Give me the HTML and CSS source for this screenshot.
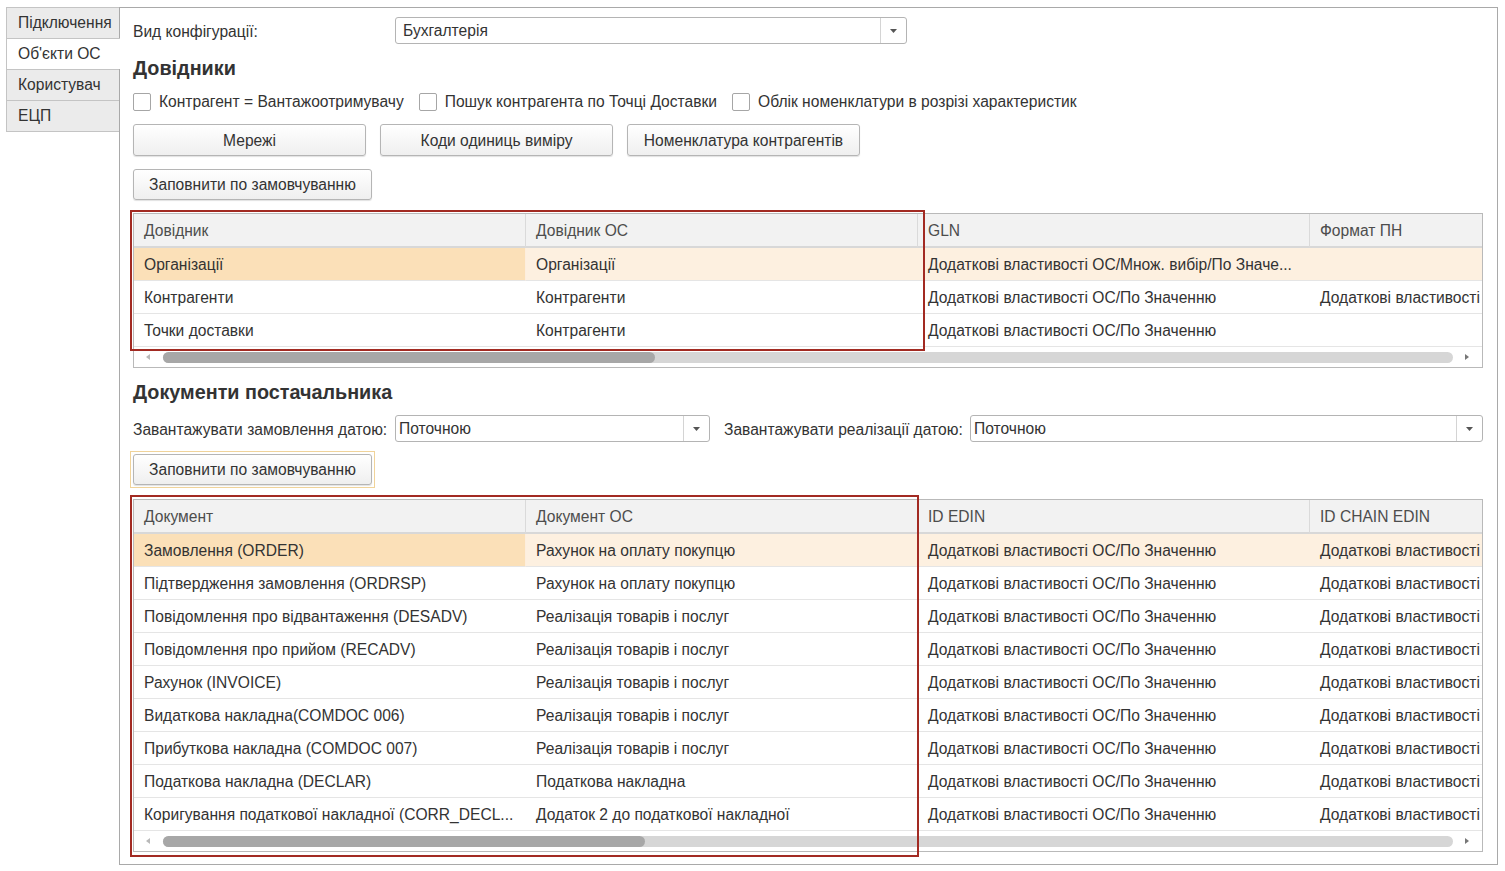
FILE: index.html
```html
<!DOCTYPE html>
<html lang="uk">
<head>
  <meta charset="UTF-8">
  <meta name="viewport" content="width=device-width, initial-scale=1.0">
  <title>Налаштування обміну</title>
  <link rel="stylesheet" href="styles.css">
</head>
<body>
  <div class="window">
    <div class="tabs">
      <div class="tab">Підключення</div>
      <div class="tab active">Об'єкти ОС</div>
      <div class="tab">Користувач</div>
      <div class="tab">ЕЦП</div>
    </div>

    <div class="panel">
      <div class="field-row first">
        <span class="label label-config">Вид конфігурації:</span>
        <div class="select select-config">
          <span class="select-value">Бухгалтерія</span>
          <span class="select-btn"><svg width="7" height="4" viewBox="0 0 7 4"><polygon points="0,0 7,0 3.5,4" fill="#555"/></svg></span>
        </div>
      </div>

      <h2 class="section-title">Довідники</h2>
      <div class="checks">
        <label class="check"><span class="box"></span>Контрагент = Вантажоотримувачу</label>
        <label class="check"><span class="box"></span>Пошук контрагента по Точці Доставки</label>
        <label class="check"><span class="box"></span>Облік номенклатури в розрізі характеристик</label>
      </div>
      <div class="buttons">
        <button class="btn btn-wide">Мережі</button>
        <button class="btn btn-wide">Коди одиниць виміру</button>
        <button class="btn btn-wide">Номенклатура контрагентів</button>
      </div>
      <div class="fill">
        <button class="btn btn-fill">Заповнити по замовчуванню</button>
      </div>

      <div class="grid-wrap grid-refs">
        <div class="grid">
          <table>
            <tr><th>Довідник</th><th>Довідник ОС</th><th>GLN</th><th>Формат ПН</th></tr>
            <tr class="cur-row"><td class="cur">Організації</td><td>Організації</td><td>Додаткові властивості ОС/Множ. вибір/По Значе...</td><td></td></tr>
            <tr><td>Контрагенти</td><td>Контрагенти</td><td>Додаткові властивості ОС/По Значенню</td><td>Додаткові властивості</td></tr>
            <tr><td>Точки доставки</td><td>Контрагенти</td><td>Додаткові властивості ОС/По Значенню</td><td></td></tr>
          </table>
          <div class="hscroll">
            <svg class="arr" width="4" height="6" viewBox="0 0 4 6"><polygon points="4,0 4,6 0,3" fill="#b9b9b9"/></svg>
            <div class="track"><div class="thumb thumb-refs"></div></div>
            <svg class="arr" width="4" height="6" viewBox="0 0 4 6"><polygon points="0,0 0,6 4,3" fill="#777"/></svg>
          </div>
        </div>
        <div class="mark mark-refs"></div>
      </div>

      <h2 class="section-title">Документи постачальника</h2>
      <div class="field-row dates">
        <span class="label label-date">Завантажувати замовлення датою:</span>
        <div class="select select-order">
          <span class="select-value">Поточною</span>
          <span class="select-btn"><svg width="7" height="4" viewBox="0 0 7 4"><polygon points="0,0 7,0 3.5,4" fill="#555"/></svg></span>
        </div>
        <span class="label label-sale">Завантажувати реалізації датою:</span>
        <div class="select select-sale">
          <span class="select-value">Поточною</span>
          <span class="select-btn"><svg width="7" height="4" viewBox="0 0 7 4"><polygon points="0,0 7,0 3.5,4" fill="#555"/></svg></span>
        </div>
      </div>
      <div class="fill focused">
        <button class="btn btn-fill">Заповнити по замовчуванню</button>
      </div>

      <div class="grid-wrap grid-docs">
        <div class="grid">
          <table>
            <tr><th>Документ</th><th>Документ ОС</th><th>ID EDIN</th><th>ID CHAIN EDIN</th></tr>
            <tr class="cur-row"><td class="cur">Замовлення (ORDER)</td><td>Рахунок на оплату покупцю</td><td>Додаткові властивості ОС/По Значенню</td><td>Додаткові властивості</td></tr>
            <tr><td>Підтвердження замовлення (ORDRSP)</td><td>Рахунок на оплату покупцю</td><td>Додаткові властивості ОС/По Значенню</td><td>Додаткові властивості</td></tr>
            <tr><td>Повідомлення про відвантаження (DESADV)</td><td>Реалізація товарів і послуг</td><td>Додаткові властивості ОС/По Значенню</td><td>Додаткові властивості</td></tr>
            <tr><td>Повідомлення про прийом (RECADV)</td><td>Реалізація товарів і послуг</td><td>Додаткові властивості ОС/По Значенню</td><td>Додаткові властивості</td></tr>
            <tr><td>Рахунок (INVOICE)</td><td>Реалізація товарів і послуг</td><td>Додаткові властивості ОС/По Значенню</td><td>Додаткові властивості</td></tr>
            <tr><td>Видаткова накладна(COMDOC 006)</td><td>Реалізація товарів і послуг</td><td>Додаткові властивості ОС/По Значенню</td><td>Додаткові властивості</td></tr>
            <tr><td>Прибуткова накладна (COMDOC 007)</td><td>Реалізація товарів і послуг</td><td>Додаткові властивості ОС/По Значенню</td><td>Додаткові властивості</td></tr>
            <tr><td>Податкова накладна (DECLAR)</td><td>Податкова накладна</td><td>Додаткові властивості ОС/По Значенню</td><td>Додаткові властивості</td></tr>
            <tr><td>Коригування податкової накладної (CORR_DECL...</td><td>Додаток 2 до податкової накладної</td><td>Додаткові властивості ОС/По Значенню</td><td>Додаткові властивості</td></tr>
          </table>
          <div class="hscroll">
            <svg class="arr" width="4" height="6" viewBox="0 0 4 6"><polygon points="4,0 4,6 0,3" fill="#b9b9b9"/></svg>
            <div class="track"><div class="thumb thumb-docs"></div></div>
            <svg class="arr" width="4" height="6" viewBox="0 0 4 6"><polygon points="0,0 0,6 4,3" fill="#777"/></svg>
          </div>
        </div>
        <div class="mark mark-docs"></div>
      </div>
    </div>
  </div>
</body>
</html>
```

FILE: styles.css
```css
*{
  box-sizing: border-box;
}
body{
  margin: 0;
  background: #fff;
  color: #333;
  font-family: "Liberation Sans", Arial, sans-serif;
  font-size: 15.6px;
}
.window{
  display: flex;
  padding: 7px 0 0 6px;
}

/* tabs on the left */
.tabs{
  width: 113px;
  display: flex;
  flex-direction: column;
}
.tab{
  width: 113px;
  height: 31px;
  border: 1px solid #c4c4c4;
  border-right: 0;
  border-bottom: 0;
  background: #ebebeb;
  padding-left: 11px;
  line-height: 29px;
  white-space: nowrap;
}
.tab:last-child{
  border-bottom: 1px solid #c4c4c4;
  height: 32px;
}
.tab.active{
  width: 114px;
  background: #fff;
  position: relative;
  z-index: 1;
}

/* main panel */
.panel{
  width: 1379px;
  height: 858px;
  border: 1px solid #a9a9a9;
  padding: 9px 14px 0 13px;
}
.field-row{
  display: flex;
  align-items: center;
  height: 27px;
}
.dates{
  margin-top: 11px;
}
.label{
  white-space: nowrap;
  flex: none;
  padding-top: 2px;
}
.label-config, .label-date{
  width: 262px;
}
.label-sale{
  width: 246px;
  margin-left: 14px;
}
.select{
  display: flex;
  height: 27px;
  border: 1px solid #b4b4b4;
  border-radius: 3px;
  background: #fff;
}
.select-config{
  width: 512px;
}
.select-order{
  width: 315px;
}
.select-sale{
  flex: 1;
}
.select-value{
  flex: 1;
  padding: 1px 0 0 7px;
  line-height: 24px;
  white-space: nowrap;
}
.dates .select-value{
  padding-left: 3px;
}
.select-btn{
  width: 26px;
  border-left: 1px solid #d4d4d4;
  display: flex;
  align-items: center;
  justify-content: center;
}

.section-title{
  margin: 12px 0 0;
  font-size: 19.8px;
  line-height: 24px;
  font-weight: bold;
  color: #333;
}

.checks{
  margin-top: 12px;
  height: 20px;
  display: flex;
  align-items: center;
  gap: 15px;
}
.check{
  display: flex;
  align-items: center;
  gap: 8px;
  white-space: nowrap;
}
.box{
  width: 18px;
  height: 18px;
  border: 1px solid #a6a6a6;
  border-radius: 2px;
  background: #fff;
}

.btn{
  height: 32px;
  border: 1px solid #b5b5b5;
  border-radius: 3px;
  background: linear-gradient(#fff, #efefef);
  box-shadow: 0 1px 1px rgba(0,0,0,.12);
  font-family: inherit;
  font-size: 15.6px;
  color: #333;
  padding: 1px 0 0;
}
.buttons{
  margin-top: 12px;
  display: flex;
  gap: 14px;
}
.btn-wide{
  width: 233px;
}
.fill{
  margin-top: 13px;
}
.btn-fill{
  width: 239px;
  height: 31px;
}
.fill.focused{
  margin: 9px 0 0 -3px;
  width: 245px;
  padding: 2px;
  border: 1px solid #f0d39a;
}

/* grids */
.grid-wrap{
  position: relative;
  margin-top: 13px;
}
.grid-docs{
  margin-top: 11px;
}
.grid{
  border: 1px solid #b9b9b9;
  overflow: hidden;
}
table{
  border-collapse: separate;
  border-spacing: 0;
  table-layout: fixed;
  width: 1568px;
}
th, td{
  width: 392px;
  padding: 2px 0 0 10px;
  text-align: left;
  white-space: nowrap;
  overflow: hidden;
  font-weight: normal;
}
th{
  height: 34px;
  background: #f2f2f2;
  color: #4d4d4d;
  border-right: 1px solid #dadada;
  border-bottom: 2px solid #d8d8d8;
  line-height: 30px;
}
td{
  height: 33px;
  border-bottom: 1px solid #e5e5e5;
  line-height: 30px;
}
.cur-row td{
  background: #fdf0e0;
}
.cur-row td.cur{
  background: #fbe0b8;
  border-right: 1px solid #fdeedd;
}

.hscroll{
  height: 20px;
  display: flex;
  align-items: center;
  padding: 0 13px 0 12px;
}
.arr{
  flex: none;
}
.track{
  flex: 1;
  height: 11px;
  margin: 0 12px 0 13px;
  border-radius: 6px;
  background: #d6d6d6;
}
.thumb{
  height: 11px;
  border-radius: 6px;
  background: #a7a7a7;
}
.thumb-refs{
  width: 492px;
}
.thumb-docs{
  width: 482px;
}

/* red frames drawn over the grids */
.mark{
  position: absolute;
  border: 2px solid #a22a22;
  pointer-events: none;
}
.mark-refs{
  top: -3px;
  left: -3px;
  width: 795px;
  height: 141px;
}
.mark-docs{
  top: -4px;
  left: -3px;
  width: 789px;
  height: 362px;
}
```
